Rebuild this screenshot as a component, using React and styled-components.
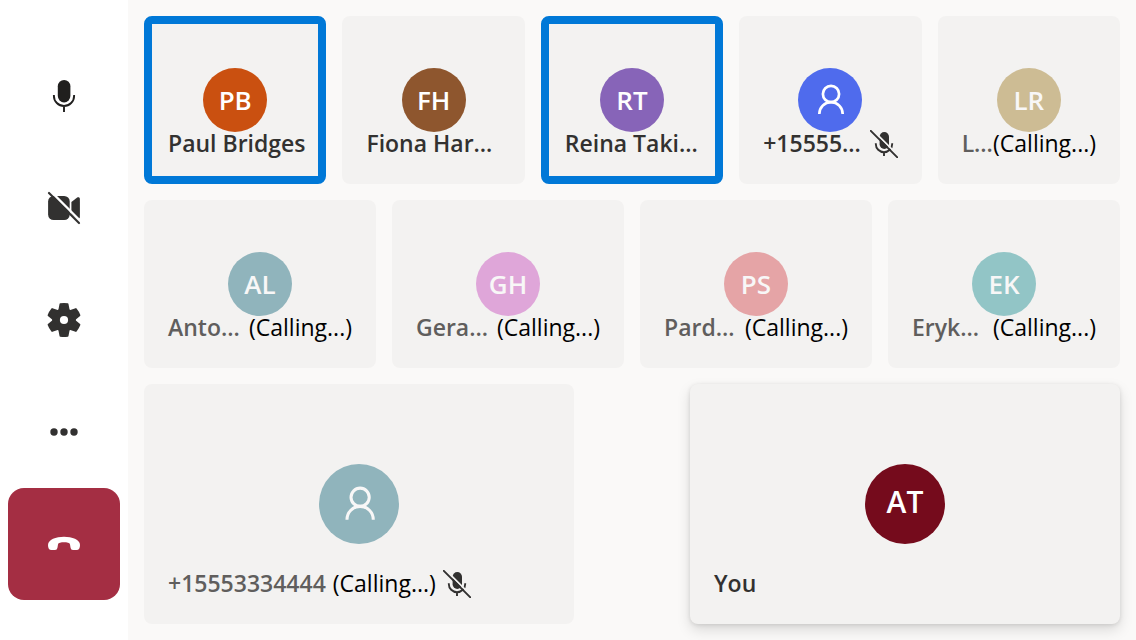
import React from "react";
import styled, { createGlobalStyle, css } from "styled-components";

const GlobalStyle = createGlobalStyle`
  *, *::before, *::after { box-sizing: border-box; }
  body {
    margin: 0;
    background: #faf9f8;
    color: #323130;
    font-family: "Segoe UI", "Open Sans", "Noto Sans", sans-serif;
  }
`;

const Page = styled.div`
  display: flex;
  min-height: 100vh;
`;

const Sidebar = styled.nav`
  display: flex;
  flex: none;
  flex-direction: column;
  justify-content: center;
  padding: 0 8px;
  background: #ffffff;
`;

const ControlButton = styled.button`
  display: flex;
  align-items: center;
  justify-content: center;
  width: 112px;
  height: 112px;
  padding: 0;
  border: 0;
  border-radius: 16px;
  background: ${(p) => (p.$danger ? "#a42e43" : "transparent")};
  color: ${(p) => (p.$danger ? "#ffffff" : "#323130")};
  cursor: pointer;
`;

const Gallery = styled.main`
  display: grid;
  flex: 1;
  min-width: 0;
  grid-template-rows: minmax(168px, 7fr) minmax(168px, 7fr) minmax(240px, 10fr);
  gap: 16px;
  padding: 16px;
`;

const GalleryRow = styled.div`
  display: flex;
  gap: 16px;
  justify-content: space-between;
`;

const TileBox = styled.section`
  display: grid;
  flex: ${(p) => (p.$large ? "0 0 calc(50% - 58px)" : "1 1 0")};
  min-width: 0;
  grid-template: minmax(0, 1fr) / minmax(0, 1fr);
  padding: 24px;
  border-radius: 8px;
  background: #f3f2f1;
  ${(p) =>
    p.$speaking &&
    css`
      padding: 16px;
      border: 8px solid #0078d7;
    `}
  ${(p) =>
    p.$floating &&
    css`
      box-shadow: 0 6px 14px rgba(0, 0, 0, 0.13), 0 1px 4px rgba(0, 0, 0, 0.11);
    `}
`;

const Avatar = styled.div`
  display: flex;
  grid-area: 1 / 1;
  place-self: center;
  align-items: center;
  justify-content: center;
  width: ${(p) => (p.$large ? 80 : 64)}px;
  height: ${(p) => (p.$large ? 80 : 64)}px;
  border-radius: 50%;
  background: ${(p) => p.$color};
  color: ${(p) => (p.$faded ? "#f8f7f7" : "#ffffff")};
`;

const Initials = styled.span`
  padding-bottom: ${(p) => (p.$large ? 4 : 1)}px;
  font-size: ${(p) => (p.$large ? 30 : 26)}px;
  font-weight: 600;
  line-height: 32px;
`;

const Label = styled.div`
  display: flex;
  grid-area: 1 / 1;
  align-self: end;
  align-items: center;
  gap: ${(p) => (p.$large ? 7 : 0)}px;
  font-size: 23px;
  line-height: 30px;
  white-space: nowrap;
`;

const Name = styled.span`
  flex: ${(p) => (p.$large ? "none" : "1")};
  min-width: 0;
  padding-bottom: 2px;
  color: ${(p) => (p.$faded ? "#605e5d" : "#323130")};
  font-weight: 600;
`;

const Status = styled.span`
  flex: none;
  padding-bottom: 2px;
  color: #000000;
`;

const Icon = styled.svg`
  flex: none;
  display: block;
`;

const MicIcon = () => (
  <Icon width="40" height="40" viewBox="0 0 40 40" fill="none" aria-hidden="true">
    <rect x="13.8" y="4" width="12.6" height="22.4" rx="6.3" fill="#201f1e" />
    <path d="M9.9 19v.9a10.1 10.1 0 0 0 20.2 0V19M20 30v6" stroke="#201f1e" strokeWidth="1.9" />
  </Icon>
);

const CameraOffIcon = () => (
  <Icon width="40" height="40" viewBox="0 0 40 40" fill="none" aria-hidden="true">
    <rect x="4.1" y="8" width="21.6" height="24" rx="5.5" fill="currentColor" />
    <path d="M27.4 14l5.8-4.4c1.2-.9 2.7-.2 2.7 1.3v18.2c0 1.5-1.5 2.2-2.7 1.3L27.4 26z" fill="currentColor" />
    <path d="M5 1.6 38.4 35" stroke="#fff" strokeWidth="2.4" />
    <path d="M5 5l30 30" stroke="currentColor" strokeWidth="2.2" strokeLinecap="round" />
  </Icon>
);

const GearIcon = () => (
  <Icon width="40" height="40" viewBox="-20 -20 40 40" fill="currentColor" aria-hidden="true">
    <circle r="11.8" />
    {[0, 60, 120, 180, 240, 300].map((angle) => (
      <path
        key={angle}
        d="M-3.6-15.8Q0-16.4 3.6-15.8L4.8-9.5H-4.8Z"
        stroke="currentColor"
        strokeWidth="1.8"
        strokeLinejoin="round"
        transform={`rotate(${angle})`}
      />
    ))}
    <circle r="4.1" fill="#fff" />
  </Icon>
);

const MoreIcon = () => (
  <Icon width="40" height="40" viewBox="0 0 40 40" fill="currentColor" aria-hidden="true">
    <circle cx="10" cy="20" r="3.7" />
    <circle cx="20" cy="20" r="3.7" />
    <circle cx="30" cy="20" r="3.7" />
  </Icon>
);

const HangUpIcon = () => (
  <Icon width="40" height="40" viewBox="0 0 40 40" fill="currentColor" aria-hidden="true">
    <path d="M20 12.7C28 12.7 36 15.5 36 21C36 24 35 26 32.5 26H29C27.5 26 26.9 25.2 26.5 23.5L26 20.5C25.8 19.3 25 18.9 24 18.7C21.5 18.2 18.5 18.2 16 18.7C15 18.9 14.2 19.3 14 20.5L13.5 23.5C13.1 25.2 12.5 26 11 26H7.5C5 26 4 24 4 21C4 15.5 12 12.7 20 12.7Z" />
  </Icon>
);

const PersonIcon = ({ size }) => (
  <Icon width={size} height={size} viewBox="0 0 32 32" fill="none" stroke="currentColor" strokeWidth="2.7" aria-hidden="true">
    <circle cx="17" cy="10" r="8.1" />
    <path d="M5.3 30a11.7 11.9 0 0 1 23.4 0" />
  </Icon>
);

const MicOffIcon = () => (
  <Icon width="28" height="28" viewBox="0 0 28 28" fill="none" role="img" aria-label="Muted">
    <rect x="9.6" y="2" width="9.4" height="17" rx="4.7" fill="#323130" />
    <path d="M5.8 13.3v.7a8.2 8.2 0 0 0 16.4 0v-.7M14 22v4" stroke="#323130" strokeWidth="1.9" />
    <path d="M1-1.6 29.5 26.8" stroke="#f3f2f1" strokeWidth="1.8" />
    <path d="M.8.8 27.4 27.4" stroke="#323130" strokeWidth="1.9" strokeLinecap="round" />
  </Icon>
);

const controls = [
  { label: "Microphone", icon: <MicIcon /> },
  { label: "Camera", icon: <CameraOffIcon /> },
  { label: "Settings", icon: <GearIcon /> },
  { label: "More", icon: <MoreIcon /> },
  { label: "Leave call", icon: <HangUpIcon />, danger: true },
];

const rows = [
  [
    { name: "Paul Bridges", initials: "PB", color: "#ca5010", speaking: true },
    { name: "Fiona Har…", initials: "FH", color: "#8e562e" },
    { name: "Reina Taki…", initials: "RT", color: "#8764b8", speaking: true },
    { name: "+15555…", color: "#4f6bed", muted: true },
    { name: "L…", initials: "LR", color: "#cdbc94", calling: true },
  ],
  [
    { name: "Anto…", initials: "AL", color: "#90b4bc", calling: true },
    { name: "Gera…", initials: "GH", color: "#dfa6d9", calling: true },
    { name: "Pard…", initials: "PS", color: "#e5a4a6", calling: true },
    { name: "Eryk…", initials: "EK", color: "#92c5c6", calling: true },
  ],
  [
    { name: "+15553334444", color: "#90b4bc", calling: true, muted: true, large: true },
    { name: "You", initials: "AT", color: "#750b1c", large: true, floating: true },
  ],
];

const Tile = ({ name, initials, color, calling, muted, speaking, large, floating }) => (
  <TileBox $speaking={speaking} $large={large} $floating={floating}>
    <Avatar $color={color} $large={large} $faded={calling}>
      {initials ? <Initials $large={large}>{initials}</Initials> : <PersonIcon size={large ? 36 : 32} />}
    </Avatar>
    <Label $large={large}>
      <Name $faded={calling} $large={large}>{name}</Name>
      {calling && <Status>(Calling...)</Status>}
      {muted && <MicOffIcon />}
    </Label>
  </TileBox>
);

export default function App() {
  return (
    <>
      <GlobalStyle />
      <Page>
        <Sidebar aria-label="Call controls">
          {controls.map((c) => (
            <ControlButton key={c.label} type="button" aria-label={c.label} $danger={c.danger}>
              {c.icon}
            </ControlButton>
          ))}
        </Sidebar>
        <Gallery>
          {rows.map((row, i) => (
            <GalleryRow key={i}>
              {row.map((p) => (
                <Tile key={p.name} {...p} />
              ))}
            </GalleryRow>
          ))}
        </Gallery>
      </Page>
    </>
  );
}
